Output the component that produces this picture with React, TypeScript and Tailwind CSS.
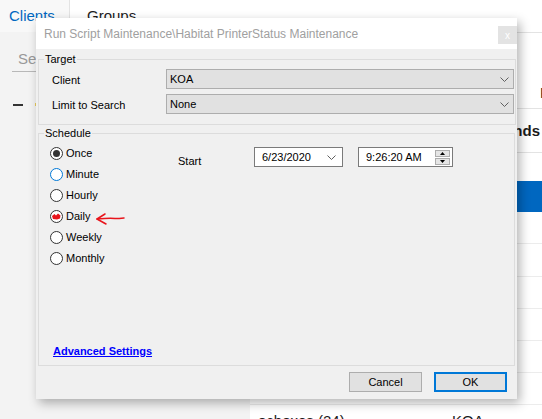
import React from 'react';

const Chevron = ({ className = '' }: { className?: string }) => (
  <svg width="9" height="5" viewBox="0 0 9 5" className={className}>
    <path d="M0.5 0.5 L4.5 4.5 L8.5 0.5" fill="none" stroke="#606060" strokeWidth="1" />
  </svg>
);

type RadioProps = { label: string; state?: 'checked' | 'focus' | 'marked' | 'plain'; arrow?: boolean };

const Radio = ({ label, state = 'plain', arrow }: RadioProps) => (
  <div className="flex items-center h-[21px]">
    <span
      className={`relative flex items-center justify-center w-[13px] h-[13px] rounded-full border bg-white ${
        state === 'focus' ? 'border-[#0078d7]' : 'border-[#333333]'
      }`}
    >
      {state === 'checked' && <span className="w-[7px] h-[7px] rounded-full bg-[#333333]" />}
      {state === 'marked' && (
        <svg width="11" height="11" viewBox="0 0 11 11">
          <path d="M1 5 L3.5 3 L5 4.5 L7 2.5 L9.5 4.5 L9 7.5 L6 8.5 L2 8 Z" fill="#e8141b" />
        </svg>
      )}
    </span>
    <span className="ml-[3px] text-[11px] leading-[13px] text-black">{label}</span>
    {arrow && (
      <svg width="30" height="14" viewBox="0 0 30 14" className="ml-[5px] mt-[4px]">
        <path d="M2 7 C8 6.5 14 6 20 6.5 C24 7 27 6 29 6" fill="none" stroke="#e8141b" strokeWidth="1.5" strokeLinecap="round" />
        <path d="M10 2 L2 7 L11 12" fill="none" stroke="#e8141b" strokeWidth="1.5" strokeLinecap="round" strokeLinejoin="round" />
      </svg>
    )}
  </div>
);

const Combo = ({ value }: { value: string }) => (
  <div className="flex items-center justify-between w-[348px] h-[20px] bg-[#e1e1e1] border border-[#adadad] pl-[3px] pr-[4px]">
    <span className="text-[11px] leading-[13px] text-black">{value}</span>
    <Chevron />
  </div>
);

export default function App() {
  return (
    <div className="relative w-[542px] h-[419px] overflow-hidden bg-white font-['Liberation_Sans',Arial,sans-serif]">
      {/* main window behind the dialog */}
      <div className="flex h-full">
        <aside className="flex flex-col w-[250px] shrink-0 bg-[#f3f3f3]">
          <div className="flex h-[32px] shrink-0 bg-white">
            <div className="w-[70px] bg-[#f8f8f8] border-r border-[#e3e3e3] pl-[9px] pt-[7px] text-[15px] leading-[18px] text-[#0067c0]">
              Clients
            </div>
            <div className="pl-[17px] pt-[7px] text-[15px] leading-[18px] text-[#1a1a1a]">Groups</div>
          </div>
          <div className="pl-[12px] pt-[18px]">
            <div className="w-[200px] border-b border-[#b8b8b8] pl-[6px] pb-[3px] text-[15px] leading-[18px] text-[#999999]">
              Search
            </div>
          </div>
          <div className="flex items-center gap-[12px] pl-[13px] pt-[31px]">
            <span className="w-[10px] h-[2px] bg-[#333333]" />
            <span className="w-[2px] h-[3px] bg-[#e8c95a]" />
          </div>
        </aside>

        <main className="flex flex-col flex-1 min-w-0 text-[15px] text-[#1a1a1a]">
          <div className="h-[33px] shrink-0 border-b border-[#e3e3e3]" />
          <div className="h-[76px] shrink-0 border-b border-[#e3e3e3] pl-[290px] pt-[51px] whitespace-nowrap leading-[18px]">Filter</div>
          <div className="flex items-center justify-end h-[44px] shrink-0 border-b border-[#e3e3e3] pr-[2px] pt-[2px] font-bold">Commands</div>
          <div className="h-[28px] shrink-0" />
          <div className="h-[31px] shrink-0 bg-[#0067c0]" />
          <div className="h-[32px] shrink-0 border-b border-[#ececec]" />
          <div className="h-[33px] shrink-0 border-b border-[#ececec]" />
          <div className="h-[32px] shrink-0 border-b border-[#ececec]" />
          <div className="h-[32px] shrink-0 border-b border-[#ececec]" />
          <div className="h-[32px] shrink-0 border-b border-[#ececec]" />
          <div className="h-[32px] shrink-0 border-b border-[#ececec]" />
          <div className="flex shrink-0 pl-[8px] pt-[7px] leading-[18px] whitespace-nowrap">
            <span className="w-[194px]">ochoxes (24)</span>
            <span>KOA</span>
          </div>
        </main>
      </div>

      {/* Run Script dialog */}
      <div className="absolute left-[36px] top-[18px] flex flex-col w-[481px] h-[381px] bg-[#f0f0f0] shadow-[3px_4px_10px_rgba(0,0,0,0.3)]">
        <div className="flex justify-between h-[31px] shrink-0 bg-white">
          <span className="pl-[8px] pt-[9px] text-[12px] leading-[14px] text-[#a0a0a0] whitespace-nowrap">
            {'Run Script Maintenance\\Habitat PrinterStatus Maintenance'}
          </span>
          <span className="flex items-center justify-center w-[19px] h-[18px] mt-[8px] bg-[#e3e3e3] text-[10px] text-white">x</span>
        </div>

        <div className="flex flex-col flex-1 px-[2px] pt-[4px]">
          <fieldset className="border border-[#dcdcdc] pl-[5px] pr-[1px] pt-[3px] pb-[10px]">
            <legend className="px-[1px] text-[11px] leading-[13px] text-black">Target</legend>
            <div className="flex items-start h-[20px]">
              <span className="w-[122px] pl-[8px] pt-[5px] text-[11px] leading-[13px]">Client</span>
              <Combo value="KOA" />
            </div>
            <div className="flex items-start h-[20px] mt-[5px]">
              <span className="w-[122px] pl-[8px] pt-[5px] text-[11px] leading-[13px]">Limit to Search</span>
              <Combo value="None" />
            </div>
          </fieldset>

          <fieldset className="mt-[2px] border border-[#dcdcdc] pl-[5px] pr-[1px]">
            <legend className="px-[1px] text-[11px] leading-[13px] text-black">Schedule</legend>
            <div className="flex flex-col justify-between h-[225px] pt-[3px] pb-[7px]">
              <div className="flex">
                <div className="flex flex-col w-[134px] pl-[6px]">
                  <Radio label="Once" state="checked" />
                  <Radio label="Minute" state="focus" />
                  <Radio label="Hourly" />
                  <Radio label="Daily" state="marked" arrow />
                  <Radio label="Weekly" />
                  <Radio label="Monthly" />
                </div>
                <div className="flex items-start h-[20px] mt-[4px] text-[11px] leading-[13px]">
                  <span className="w-[76px] pt-[8px]">Start</span>
                  <div className="flex items-center justify-between w-[89px] h-[20px] bg-white border border-[#7a7a7a] pl-[7px] pr-[6px]">
                    <span>6/23/2020</span>
                    <Chevron />
                  </div>
                  <div className="flex items-center justify-between w-[95px] h-[20px] ml-[15px] bg-white border border-[#7a7a7a] pl-[7px] pr-[2px]">
                    <span>9:26:20 AM</span>
                    <div className="flex flex-col gap-[1px]">
                      <span className="flex items-center justify-center w-[15px] h-[7px] bg-[#e5e5e5] border border-[#adadad]">
                        <svg width="5" height="3" viewBox="0 0 5 3"><path d="M0 3 L2.5 0 L5 3 Z" fill="#000" /></svg>
                      </span>
                      <span className="flex items-center justify-center w-[15px] h-[7px] bg-[#e5e5e5] border border-[#adadad]">
                        <svg width="5" height="3" viewBox="0 0 5 3"><path d="M0 0 L2.5 3 L5 0 Z" fill="#000" /></svg>
                      </span>
                    </div>
                  </div>
                </div>
              </div>
              <span className="pl-[9px] text-[11px] leading-[13px] font-bold text-[#0000ff] underline">Advanced Settings</span>
            </div>
          </fieldset>

          <div className="flex justify-end gap-[12px] mt-[6px] pr-[8px]">
            <button className="w-[73px] h-[20px] bg-[#e1e1e1] border border-[#adadad] text-[11px] leading-[13px] text-black">Cancel</button>
            <button className="w-[73px] h-[20px] bg-[#e1e1e1] border-2 border-[#0078d7] text-[11px] leading-[13px] text-black">OK</button>
          </div>
        </div>
      </div>
    </div>
  );
}
